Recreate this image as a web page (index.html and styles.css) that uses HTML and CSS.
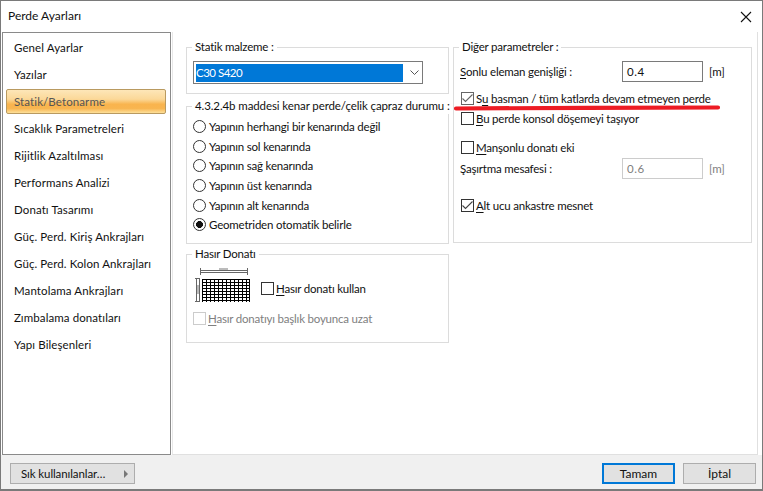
FILE: index.html
```html
<!DOCTYPE html>
<html lang="tr">
<head>
<meta charset="utf-8">
<title>Perde Ayarları</title>
<link rel="stylesheet" href="styles.css">
</head>
<body>
<div class="window">
  <header class="titlebar">
    <span class="title">Perde Ayarları</span>
    <svg class="close" width="12" height="12" viewBox="0 0 12 12"><path d="M1 1l10 10M11 1L1 11" stroke="#111" stroke-width="1.1" fill="none"/></svg>
  </header>
  <div class="main">
    <nav class="nav">
      <div class="nav-item">Genel Ayarlar</div>
      <div class="nav-item">Yazılar</div>
      <div class="nav-item active">Statik/Betonarme</div>
      <div class="nav-item">Sıcaklık Parametreleri</div>
      <div class="nav-item">Rijitlik Azaltılması</div>
      <div class="nav-item">Performans Analizi</div>
      <div class="nav-item">Donatı Tasarımı</div>
      <div class="nav-item">Güç. Perd. Kiriş Ankrajları</div>
      <div class="nav-item">Güç. Perd. Kolon Ankrajları</div>
      <div class="nav-item">Mantolama Ankrajları</div>
      <div class="nav-item">Zımbalama donatıları</div>
      <div class="nav-item">Yapı Bileşenleri</div>
    </nav>
    <section class="panel">
      <div class="col-left">
        <fieldset class="group g-material">
          <legend>Statik malzeme :</legend>
          <div class="select">
            <span class="select-value">C30 S420</span>
            <svg class="chev" width="9" height="5" viewBox="0 0 9 5"><path d="M0.500 0.500l4 4 4-4" stroke="#555" stroke-width="1" fill="none"/></svg>
          </div>
        </fieldset>
        <fieldset class="group g-radio">
          <legend>4.3.2.4b maddesi kenar perde/çelik çapraz durumu :</legend>
          <label class="opt"><i class="radio"></i>Yapının herhangi bir kenarında değil</label>
          <label class="opt"><i class="radio"></i>Yapının sol kenarında</label>
          <label class="opt"><i class="radio"></i>Yapının sağ kenarında</label>
          <label class="opt"><i class="radio"></i>Yapının üst kenarında</label>
          <label class="opt"><i class="radio"></i>Yapının alt kenarında</label>
          <label class="opt"><i class="radio on"></i>Geometriden otomatik belirle</label>
        </fieldset>
        <fieldset class="group g-mesh">
          <legend>Hasır Donatı</legend>
          <div class="mesh-row">
            <svg class="mesh" width="56" height="34" viewBox="0 0 56 34">
              <path d="M5.500 2.500h47M5.500 4.500h47M5.500 0v7M52.500 0v7M0 10.500h5M0 33.500h5M1.500 10v24M4.500 10v24" stroke="#666" stroke-width="1" fill="none"/>
              <rect x="24" y="0" width="9" height="2" fill="#bbb"/>
              <rect x="2" y="17" width="2" height="9" fill="#bbb"/>
              <path d="M7 11.500h48M7 14.500h48M7 17.500h48M7 20.500h48M7 23.500h48M7 26.500h48M7 29.500h48M7 32.500h48M7.500 11v23M11.500 11v23M15.500 11v23M19.500 11v23M23.500 11v23M27.500 11v23M31.500 11v23M35.500 11v23M39.500 11v23M43.500 11v23M47.500 11v23M51.500 11v23M54.500 11v23" stroke="#000" stroke-width="1" fill="none"/>
            </svg>
            <label class="check c-mesh"><i class="box"></i><span><u>H</u>asır donatı kullan</span></label>
          </div>
          <label class="check disabled"><i class="box"></i><span><u>H</u>asır donatıyı başlık boyunca uzat</span></label>
        </fieldset>
      </div>
      <fieldset class="group g-other">
        <legend>Diğer parametreler :</legend>
        <div class="field f-width">
          <span class="field-label"><u>S</u>onlu eleman genişliği :</span>
          <span class="input">0.4</span>
          <span class="unit">[m]</span>
        </div>
        <label class="check c-basement"><i class="box checked"><svg width="11" height="9" viewBox="0 0 11 9"><path d="M0.500 4.500l3 3 7-7" stroke="#666" stroke-width="1.1" fill="none"/></svg></i><span>S<u>u</u> basman / tüm katlarda devam etmeyen perde</span></label>
        <label class="check c-cantilever"><i class="box"></i><span><u>B</u>u perde konsol döşemeyi taşıyor</span></label>
        <label class="check c-sleeve"><i class="box"></i><span><u>M</u>anşonlu donatı eki</span></label>
        <div class="field disabled-field">
          <span class="field-label">Şaşırtma mesafesi :</span>
          <span class="input">0.6</span>
          <span class="unit">[m]</span>
        </div>
        <label class="check c-fixed"><i class="box"><svg width="11" height="9" viewBox="0 0 11 9"><path d="M0.500 4.500l3 3 7-7" stroke="#444" stroke-width="1.1" fill="none"/></svg></i><span><u>A</u>lt ucu ankastre mesnet</span></label>
      </fieldset>
      <svg class="redline" width="270" height="8" viewBox="0 0 270 8"><path d="M4 4.500C70 4 200 3.500 266 3.500" stroke="#ed1c24" stroke-width="4.200" stroke-linecap="round" fill="none"/></svg>
    </section>
  </div>
  <footer class="footer">
    <button class="btn btn-menu"><span>Sık kullanılanlar…</span><i class="tri"></i></button>
    <div class="actions">
      <button class="btn btn-ok">Tamam</button>
      <button class="btn btn-cancel">İptal</button>
    </div>
  </footer>
</div>
</body>
</html>
```
FILE: styles.css
```css
* { box-sizing: border-box; }
html, body { margin: 0; height: 100%; }
body {
  font-family: Lato, "Noto Sans", sans-serif;
  font-size: 12px;
  color: #111;
  background: #fff;
}
.window {
  width: 763px;
  height: 491px;
  border: 1px solid #7a7a7a;
  border-width: 1px 1px 2px 1px;
  display: flex;
  flex-direction: column;
  background: #fff;
}
.titlebar {
  height: 31px;
  flex: none;
  display: flex;
  align-items: center;
  justify-content: space-between;
  padding: 0 10px 2px 7px;
}
.close { margin-top: 2px; }
.main { flex: 1; display: flex; min-height: 0; }
.nav {
  width: 169px;
  margin-left: 1px;
  border: 1px solid #8a8a8a;
  padding-top: 2px;
  flex: none;
  background: #fff;
}
.nav-item {
  height: 25px;
  margin: 0 4px 2px 3px;
  padding-left: 8px;
  line-height: 25px;
  font-size: 11.500px;
  white-space: nowrap;
  letter-spacing: 0.1px;
}
.nav-item.active {
  color: #555;
  border: 1px solid #b99a60;
  border-radius: 2px;
  line-height: 23px;
  padding-left: 7px;
  background: linear-gradient(#fde6b8 0%, #fbd898 40%, #f9b44e 62%, #f8b550 80%, #fde09a 100%);
}
.panel {
  flex: 1;
  position: relative;
  margin-left: 1px;
  margin-right: 4px;
  border-right: 1px solid #e0e0e0;
  border-bottom: 1px solid #e0e0e0;
  border-left: 1px solid #e8e8e8;
  display: flex;
  gap: 4px;
  padding: 7px 0 0 13px;
  align-items: flex-start;
  font-size: 11.500px;
  letter-spacing: -0.2px;
}
.col-left { width: 263px; display: flex; flex-direction: column; flex: none; }
.group {
  margin: 0;
  border: 1px solid #dcdcdc;
  padding: 0;
  min-width: 0;
}
.group > :not(legend) { margin-left: 6px; }
.group legend {
  padding: 0 3px;
  margin-left: 5px;
  line-height: 16px;
  white-space: nowrap;
}
.g-radio legend { letter-spacing: -0.1px; }
.g-material { height: 55px; }
.select {
  width: 230px;
  height: 23px;
  margin-top: 6px;
  border: 1px solid #7a7a7a;
  padding: 2px;
  display: flex;
  align-items: center;
  background: #fff;
}
.select-value {
  width: 207px;
  height: 18px;
  line-height: 18px;
  background: #0078d7;
  color: #fff;
  letter-spacing: -0.5px;
}
.chev { margin-left: 7px; }
.g-radio { height: 146px; margin-top: 4px; }
.opt { display: flex; align-items: center; height: 19.600px; }
.opt:first-of-type { margin-top: 3px; }
.opt .radio {
  width: 13px; height: 13px;
  border: 1px solid #333;
  border-radius: 50%;
  margin-right: 3px;
  display: block;
  flex: none;
  background: #fff;
}
.opt .radio.on { background: radial-gradient(circle, #111 0 3.200px, #fff 3.700px); }
.g-mesh { height: 97px; margin-top: 2px; }
.mesh-row { display: flex; align-items: flex-start; height: 34px; margin-top: 6px; }
.mesh { display: block; margin-right: 10px; margin-left: 2px; }
.check { display: flex; align-items: center; }
.c-mesh { height: 18px; margin-top: 11px; }
.box {
  width: 13px; height: 13px;
  border: 1px solid #333;
  display: flex;
  align-items: center;
  justify-content: center;
  margin-right: 2px;
  flex: none;
  background: #fff;
}
.box.checked { border-color: #666; }
.check.disabled { color: #808080; margin-top: 7px; height: 18px; }
.check.disabled .box { border-color: #ccc; }
u { text-underline-offset: 2px; }
.g-other { width: 299px; height: 204px; flex: none; }
.field { display: flex; align-items: center; height: 21px; }
.f-width { margin-top: 6px; }
.field-label { width: 162px; flex: none; }
.input {
  width: 81px;
  height: 21px;
  border: 1px solid #7a7a7a;
  padding-left: 4px;
  line-height: 19px;
  letter-spacing: 0.6px;
  flex: none;
}
.unit { margin-left: 6px; letter-spacing: 0; }
.group > .disabled-field { margin-top: 2px; }
.disabled-field .input { border-color: #ccc; color: #808080; }
.disabled-field .unit { color: #808080; }
.group > .check.c-basement, .group > .check.c-cantilever, .group > .check.c-sleeve, .group > .check.c-fixed { margin-left: 7px; height: 18px; }
.c-basement { margin-top: 7px; }
.c-cantilever { margin-top: 2px; }
.c-sleeve { margin-top: 11px; }
.c-fixed { margin-top: 17px; }
.redline { position: absolute; left: 279px; top: 72px; }
.footer {
  height: 34px;
  flex: none;
  background: #f0f0f0;
  display: flex;
  align-items: flex-start;
  justify-content: space-between;
  padding: 8px 6px 0 9px;
}
.btn {
  font: inherit;
  color: #111;
  height: 21px;
  background: #e1e1e1;
  border: 1px solid #adadad;
  padding: 0;
}
.btn-menu {
  width: 125px;
  display: flex;
  align-items: center;
  justify-content: space-between;
  padding: 0 6px 0 10px;
  font-size: 11.500px;
  letter-spacing: -0.1px;
}
.tri { width: 0; height: 0; border-left: 4px solid #777; border-top: 4px solid transparent; border-bottom: 4px solid transparent; }
.actions { display: flex; gap: 8px; }
.btn-ok { width: 73px; border: 2px solid #0078d7; }
.btn-cancel { width: 73px; }
```
